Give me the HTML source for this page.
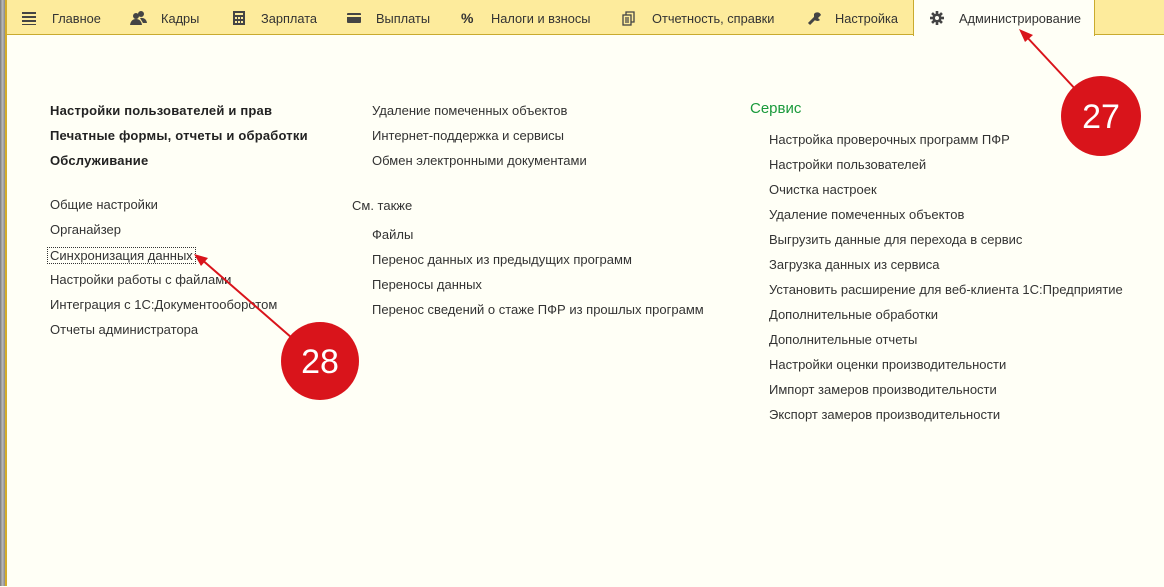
<!DOCTYPE html>
<html><head><meta charset="utf-8"><style>
*{margin:0;padding:0;box-sizing:border-box}
body{width:1164px;height:586px;overflow:hidden;background:#fffff6;font-family:"Liberation Sans",sans-serif;font-size:13px;color:#333;position:relative}
.strip{position:absolute;left:0;top:0;width:5px;height:586px;background:linear-gradient(90deg,#777,#bbb 50%,#888)}
.gl{position:absolute;left:5px;top:0;width:2px;height:586px;background:#d3ac2b}
.bar{position:absolute;left:7px;top:0;width:1157px;height:35px;background:#fdeb9c;border-bottom:1px solid #c9ab2f}
.tab{position:absolute;top:1px;height:35px;line-height:35px;color:#333;font-size:12.8px}
.act{position:absolute;left:913px;top:0;width:182px;height:36px;background:#fffff6;border-left:1px solid #c9ab2f;border-right:1px solid #c9ab2f}
.t{position:absolute;white-space:nowrap;line-height:16px;top:1px}
.b{font-weight:bold;color:#222;letter-spacing:0.2px}
.ic{position:absolute;top:11px}
</style></head><body>
<div class="strip"></div><div class="gl"></div>
<div class="bar"></div>
<div class="act"></div>
<svg class="ic" style="left:22px" width="14" height="14"><g fill="#444"><rect x="0" y="1" width="14" height="2"/><rect x="0" y="5" width="14" height="2"/><rect x="0" y="9" width="14" height="2"/><rect x="0" y="13" width="14" height="1.5"/></g></svg>
<div class="tab" style="left:52px">Главное</div>
<svg class="ic" style="left:130px" width="18" height="14"><g fill="#444"><circle cx="11" cy="3" r="3"/><circle cx="6" cy="5" r="3"/><path d="M0 14 Q1 8 6 8 Q11 8 12 14Z"/><path d="M10 7 Q16 6 17 12 L13 12Z"/></g></svg>
<div class="tab" style="left:161px">Кадры</div>
<svg class="ic" style="left:233px" width="12" height="14"><rect x="0" y="0" width="12" height="14" fill="#444"/><g fill="#fdeb9c"><rect x="2" y="2" width="8" height="2"/><rect x="2" y="6" width="2" height="2"/><rect x="5" y="6" width="2" height="2"/><rect x="8" y="6" width="2" height="2"/><rect x="2" y="10" width="2" height="2"/><rect x="5" y="10" width="2" height="2"/><rect x="8" y="10" width="2" height="2"/></g></svg>
<div class="tab" style="left:261px">Зарплата</div>
<svg class="ic" style="left:347px" width="14" height="14"><rect x="0" y="2" width="14" height="10" rx="1" fill="#444"/><rect x="0" y="4" width="14" height="2" fill="#fdeb9c"/></svg>
<div class="tab" style="left:376px">Выплаты</div>
<div class="tab" style="left:461px;font-weight:bold;font-size:14px">%</div>
<div class="tab" style="left:491px">Налоги и взносы</div>
<svg class="ic" style="left:622px" width="13" height="15"><g fill="none" stroke="#444" stroke-width="1.3"><rect x="1" y="4" width="8" height="10"/><path d="M4 4V1h8v10H9"/><path d="M3 7h4M3 9h4M3 11h4"/></g></svg>
<div class="tab" style="left:652px">Отчетность, справки</div>
<svg class="ic" style="left:807px" width="15" height="15"><path d="M2 13 L8 7" stroke="#444" stroke-width="3"/><path d="M7 3 A4 4 0 0 1 14 4 L11 7 L13 9 A4 4 0 0 1 7 8Z" fill="#444"/></svg>
<div class="tab" style="left:835px">Настройка</div>
<svg class="ic" style="left:930px" width="14" height="14" viewBox="-7 -7 14 14"><g fill="#444"><circle r="4.5"/><rect x="-1.3" y="-7" width="2.6" height="14"/><rect x="-7" y="-1.3" width="14" height="2.6"/><rect x="-1.3" y="-7" width="2.6" height="14" transform="rotate(45)"/><rect x="-1.3" y="-7" width="2.6" height="14" transform="rotate(-45)"/></g><circle r="2" fill="#fffff6"/></svg>
<div class="tab" style="left:959px">Администрирование</div>

<div style="position:absolute;left:0;top:1px;width:1164px;height:586px">
<div class="t b" style="left:50px;top:102px">Настройки пользователей и прав</div>
<div class="t b" style="left:50px;top:127px">Печатные формы, отчеты и обработки</div>
<div class="t b" style="left:50px;top:152px">Обслуживание</div>
<div class="t" style="left:50px;top:196px">Общие настройки</div>
<div class="t" style="left:50px;top:221px">Органайзер</div>
<div class="t" style="left:47px;top:246px;border:1px dotted #333;padding:0 2px;line-height:15px">Синхронизация данных</div>
<div class="t" style="left:50px;top:271px">Настройки работы с файлами</div>
<div class="t" style="left:50px;top:296px">Интеграция с 1С:Документооборотом</div>
<div class="t" style="left:50px;top:321px">Отчеты администратора</div>

<div class="t" style="left:372px;top:102px">Удаление помеченных объектов</div>
<div class="t" style="left:372px;top:127px">Интернет-поддержка и сервисы</div>
<div class="t" style="left:372px;top:152px">Обмен электронными документами</div>
<div class="t" style="left:352px;top:197px">См. также</div>
<div class="t" style="left:372px;top:226px">Файлы</div>
<div class="t" style="left:372px;top:251px">Перенос данных из предыдущих программ</div>
<div class="t" style="left:372px;top:276px">Переносы данных</div>
<div class="t" style="left:372px;top:301px">Перенос сведений о стаже ПФР из прошлых программ</div>

<div class="t" style="left:750px;top:99px;color:#1a9a3c;font-size:15px;line-height:18px">Сервис</div>
<div class="t" style="left:769px;top:131px">Настройка проверочных программ ПФР</div>
<div class="t" style="left:769px;top:156px">Настройки пользователей</div>
<div class="t" style="left:769px;top:181px">Очистка настроек</div>
<div class="t" style="left:769px;top:206px">Удаление помеченных объектов</div>
<div class="t" style="left:769px;top:231px">Выгрузить данные для перехода в сервис</div>
<div class="t" style="left:769px;top:256px">Загрузка данных из сервиса</div>
<div class="t" style="left:769px;top:281px">Установить расширение для веб-клиента 1С:Предприятие</div>
<div class="t" style="left:769px;top:306px">Дополнительные обработки</div>
<div class="t" style="left:769px;top:331px">Дополнительные отчеты</div>
<div class="t" style="left:769px;top:356px">Настройки оценки производительности</div>
<div class="t" style="left:769px;top:381px">Импорт замеров производительности</div>
<div class="t" style="left:769px;top:406px">Экспорт замеров производительности</div>
</div>

<svg style="position:absolute;left:0;top:0" width="1164" height="586">
<g stroke="#d9141b" stroke-width="2"><line x1="1078" y1="92" x2="1025" y2="35"/><line x1="292" y1="338" x2="200" y2="258"/></g>
<g fill="#d9141b"><path d="M1019 29 L1033 35 L1025 42Z"/><path d="M194 254 L208 258 L201 266Z"/>
<circle cx="1101" cy="116" r="40"/><circle cx="320" cy="361" r="39"/></g>
<g fill="#fff" font-family="Liberation Sans,sans-serif" font-size="34" text-anchor="middle"><text x="1101" y="128">27</text><text x="320" y="373">28</text></g>
</svg>
</body></html>
